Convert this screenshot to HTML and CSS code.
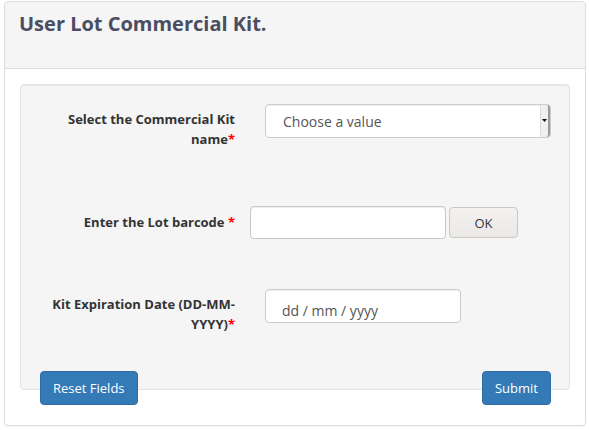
FILE: index.html
```html
<!DOCTYPE html>
<html lang="en">
<head>
<meta charset="utf-8">
<title>User Lot Commercial Kit</title>
<link rel="stylesheet" href="styles.css">
</head>
<body>
<div class="panel">
  <div class="panel-heading">
    <h3 class="panel-title">User Lot Commercial Kit.</h3>
  </div>
  <div class="panel-body">
    <div class="well">
      <div class="form-row row-kit">
        <label class="form-label">Select the Commercial Kit name<span class="req">*</span></label>
        <div class="form-control-col">
          <div class="select-wrap">
            <select class="select">
              <option>Choose a value</option>
            </select>
            <span class="select-arrow">
              <svg width="5" height="3" viewBox="0 0 5 3"><path d="M0 0H5L2.5 3Z" fill="#111"/></svg>
            </span>
          </div>
        </div>
      </div>
      <div class="form-row row-barcode">
        <label class="form-label">Enter the Lot barcode <span class="req">*</span></label>
        <div class="form-control-col inline">
          <input class="text-input" type="text">
          <button class="btn-ok" type="button">OK</button>
        </div>
      </div>
      <div class="form-row row-date">
        <label class="form-label">Kit Expiration Date (DD-MM-YYYY)<span class="req">*</span></label>
        <div class="form-control-col">
          <div class="date-input">dd / mm / yyyy</div>
        </div>
      </div>
    </div>
    <div class="actions">
      <button class="btn-primary" type="button">Reset Fields</button>
      <button class="btn-primary" type="button">Submit</button>
    </div>
  </div>
</div>
</body>
</html>
```
FILE: styles.css
```css
* { box-sizing: border-box; }
html, body { background: #fff; }
body {
  margin: 0;
  padding: 1px 3px 4px 4px;
  font-family: "Open Sans", "Liberation Sans", sans-serif;
  color: #333;
}
.panel {
  border: 1px solid #dddddd;
  border-radius: 4px;
  background: #fff;
  box-shadow: 0 1px 1px rgba(0,0,0,0.05);
}
.panel-heading {
  height: 67px;
  padding: 11px 15px 0 14px;
  background: #f5f5f5;
  border-bottom: 1px solid #dddddd;
  border-radius: 3px 3px 0 0;
}
.panel-title {
  margin: 0;
  font-size: 20px;
  line-height: 22px;
  font-weight: 700;
  color: #4a4e62;
}
.panel-body {
  padding: 15px 15px 20px 15px;
}
.well {
  background: #f5f5f5;
  border: 1px solid #e3e3e3;
  border-radius: 4px;
  box-shadow: inset 0 1px 1px rgba(0,0,0,0.05);
  padding: 19px 18px 19px 19px;
}
.form-row {
  display: grid;
  grid-template-columns: 210px 1fr;
  align-items: start;
}
.row-kit { margin-bottom: 57px; }
.row-barcode { margin-bottom: 50px; }
.row-date { margin-bottom: 36px; }
.form-label {
  text-align: right;
  padding: 5px 15px 0 0;
  font-size: 13px;
  line-height: 20px;
  font-weight: 700;
  color: #333;
}
.row-barcode .form-label { padding-top: 6px; }
.req { color: #ff0000; }
.form-control-col { padding-left: 15px; }
.form-control-col.inline {
  padding-left: 0;
  display: flex;
  align-items: center;
  gap: 3px;
}
.select-wrap {
  position: relative;
  width: 286px;
  height: 34px;
}
.select {
  -webkit-appearance: none;
  appearance: none;
  width: 100%;
  height: 34px;
  padding: 0 14px 0 17px;
  font-family: "Open Sans", "Liberation Sans", sans-serif;
  font-size: 14px;
  color: #555;
  background: #fff;
  border: 1px solid #cccccc;
  border-radius: 4px;
  box-shadow: inset 0 1px 1px rgba(0,0,0,0.075);
  outline: none;
}
.select-arrow {
  position: absolute;
  top: 1px;
  right: 1px;
  bottom: 1px;
  width: 10px;
  background: #f0f0f0;
  border-left: 1px solid #dcdcdc;
  border-right: 2px solid #9a9a9a;
  border-radius: 0 3px 3px 0;
  display: flex;
  align-items: center;
  justify-content: center;
}
.select-arrow svg { display: block; margin-top: -1px; }
.text-input {
  width: 196px;
  height: 33px;
  padding: 6px 12px;
  font-family: "Open Sans", "Liberation Sans", sans-serif;
  font-size: 14px;
  color: #555;
  background: #fff;
  border: 1px solid #cbc7c3;
  border-radius: 4px;
  box-shadow: inset 0 1px 1px rgba(0,0,0,0.075);
  outline: none;
}
.btn-ok {
  width: 69px;
  height: 31px;
  padding: 0;
  font-family: "Open Sans", "Liberation Sans", sans-serif;
  font-size: 13px;
  color: #333;
  background: linear-gradient(#f3f2f1, #eae9e8);
  border: 1px solid #cbc7c3;
  border-radius: 4px;
}
.date-input {
  width: 196px;
  height: 34px;
  padding: 11px 0 0 16px;
  font-size: 14px;
  line-height: 20px;
  color: #555;
  background: #fff;
  border: 1px solid #cccccc;
  border-radius: 4px;
  box-shadow: inset 0 1px 1px rgba(0,0,0,0.075);
}
.actions {
  margin-top: -19px;
  padding: 0 19px 0 20px;
  display: flex;
  justify-content: space-between;
}
.btn-primary {
  height: 34px;
  padding: 0 12px;
  font-family: "Open Sans", "Liberation Sans", sans-serif;
  font-size: 13px;
  color: #fff;
  background: #337ab7;
  border: 1px solid #2e6da4;
  border-radius: 4px;
}
```
